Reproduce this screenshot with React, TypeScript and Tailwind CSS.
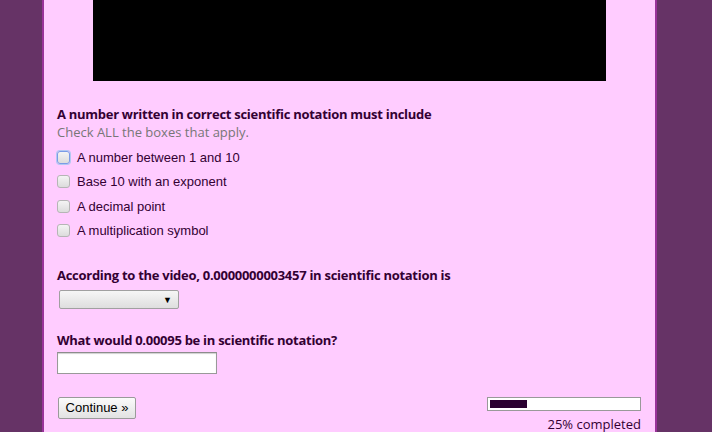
const options = [
  "A number between 1 and 10",
  "Base 10 with an exponent",
  "A decimal point",
  "A multiplication symbol",
];

const head =
  "font-['Open_Sans',sans-serif] text-[13px] font-bold tracking-[-0.28px] text-[#330033]";

export default function App() {
  return (
    <div className="min-h-screen bg-[#663366]">
      <div className="ml-[42px] min-h-screen w-[615px] border-x-2 border-[#993399] bg-[#ffccff] pl-[13px] pr-[14px]">
        <div className="mx-auto h-[81px] w-[513px] bg-black" />

        <div className="mt-[24px] flex flex-col">
          <p className={`${head} leading-[18px]`}>
            A number written in correct scientific notation must include
          </p>
          <p className="font-['Open_Sans',sans-serif] text-[13px] leading-[18px] text-[#777777]">
            Check ALL the boxes that apply.
          </p>
          <div className="mt-[4px] flex flex-col">
            {options.map((o, i) => (
              <label
                key={o}
                className="flex h-[24.5px] items-center gap-[7px] font-['Liberation_Sans',sans-serif] text-[13px] text-[#330033]"
              >
                <span
                  className={`h-[13px] w-[13px] rounded-[3px] border bg-gradient-to-b from-[#f4f4f4] to-[#dcdcdc] ${
                    i === 0 ? "border-[#7a9ce6] shadow-[0_0_0_1px_#b3c8f2]" : "border-[#b5b5b5]"
                  }`}
                />
                {o}
              </label>
            ))}
          </div>
        </div>

        <div className="mt-[23px]">
          <p className={`${head} leading-[18px]`}>
            According to the video, 0.0000000003457 in scientific notation is
          </p>
          <div className="ml-[2px] mt-[6px] flex h-[19px] w-[120px] items-center justify-end rounded-[2px] border border-[#a0a0a0] bg-gradient-to-b from-[#f6f6f6] to-[#dedede] pr-[6px]">
            <span className="text-[9px] leading-none text-black">▼</span>
          </div>
        </div>

        <div className="mt-[22px]">
          <p className={`${head} leading-[18px]`}>What would 0.00095 be in scientific notation?</p>
          <div className="mt-[3px] h-[22px] w-[160px] border border-[#999999] border-t-[#8c8c8c] bg-white shadow-[inset_0_1px_1px_#d0d0d0]" />
        </div>

        <div className="mt-[23px] flex items-start justify-between">
          <button className="ml-[1px] h-[22px] w-[78px] rounded-[2px] border border-[#9a9a9a] bg-gradient-to-b from-[#fbfbfb] to-[#e2e2e2] font-['Liberation_Sans',sans-serif] text-[13px] text-black">
            Continue »
          </button>
          <div className="flex flex-col items-end">
            <div className="h-[14px] w-[154px] border border-[#999999] bg-white p-[2px]">
              <div className="h-full w-[37px] bg-[#2a0030]" />
            </div>
            <p className="mt-[4px] font-['Open_Sans',sans-serif] text-[13px] leading-[18px] text-[#330033]">
              25% completed
            </p>
          </div>
        </div>
      </div>
    </div>
  );
}
